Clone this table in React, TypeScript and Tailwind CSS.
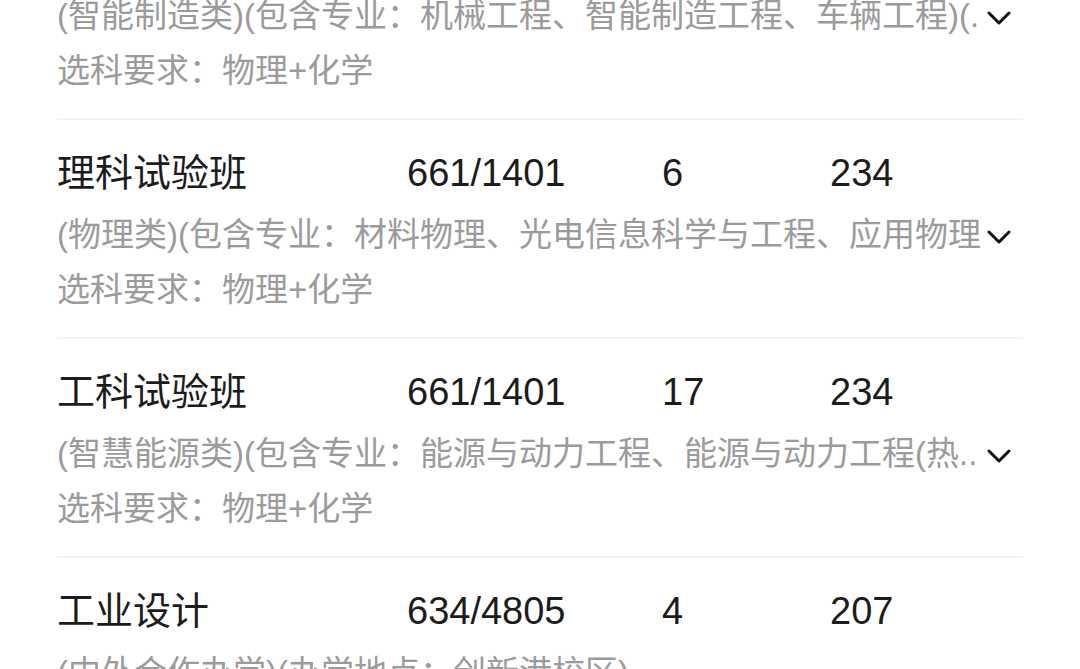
import React from "react";

type Row = {
  name: string;
  score: string;
  count: string;
  rank: string;
  sub: string;
  req: string;
  more: boolean;
};

const rows: Row[] = [
  {
    name: "机械类",
    score: "661/1401",
    count: "12",
    rank: "234",
    sub: "(智能制造类)(包含专业：机械工程、智能制造工程、车辆工程)(.",
    req: "选科要求：物理+化学",
    more: true,
  },
  {
    name: "理科试验班",
    score: "661/1401",
    count: "6",
    rank: "234",
    sub: "(物理类)(包含专业：材料物理、光电信息科学与工程、应用物理",
    req: "选科要求：物理+化学",
    more: true,
  },
  {
    name: "工科试验班",
    score: "661/1401",
    count: "17",
    rank: "234",
    sub: "(智慧能源类)(包含专业：能源与动力工程、能源与动力工程(热..",
    req: "选科要求：物理+化学",
    more: true,
  },
  {
    name: "工业设计",
    score: "634/4805",
    count: "4",
    rank: "207",
    sub: "(中外合作办学)(办学地点：创新港校区)",
    req: "选科要求：不限",
    more: false,
  },
];

function Chevron() {
  return (
    <svg width="24" height="14" viewBox="0 0 24 14" className="shrink-0">
      <path
        d="M2 2 L12 12 L22 2"
        fill="none"
        stroke="#111111"
        strokeWidth="3"
        strokeLinecap="round"
        strokeLinejoin="round"
      />
    </svg>
  );
}

export default function App() {
  return (
    <div
      className="w-[1080px] h-[669px] overflow-hidden bg-white"
      style={{ fontFamily: '"Liberation Sans", "Noto Sans CJK SC", sans-serif' }}
    >
      <div className="mt-[-99px] px-[57px]">
        {rows.map((r, i) => (
          <div key={i} className="pt-[28px] pb-[20px] border-b-2 border-[#f3f3f3]">
            <div className="flex h-[50px] items-center text-[38px] text-[#1c1c1c] leading-none">
              <div className="w-[350px] shrink-0">{r.name}</div>
              <div className="w-[255px] shrink-0">{r.score}</div>
              <div className="w-[168px] shrink-0">{r.count}</div>
              <div className="flex-1">{r.rank}</div>
            </div>
            <div className="mt-[9px] text-[33px] text-[#9b9b9b]">
              <div className="flex h-[56px] items-center">
                <div className="w-[929px] shrink-0 overflow-hidden whitespace-nowrap leading-[56px]">{r.sub}</div>
                {r.more && (
                  <div className="ml-[1px] mt-[4px] flex items-center">
                    <Chevron />
                  </div>
                )}
              </div>
              <div className="h-[54px] leading-[54px]">{r.req}</div>
            </div>
          </div>
        ))}
      </div>
    </div>
  );
}
